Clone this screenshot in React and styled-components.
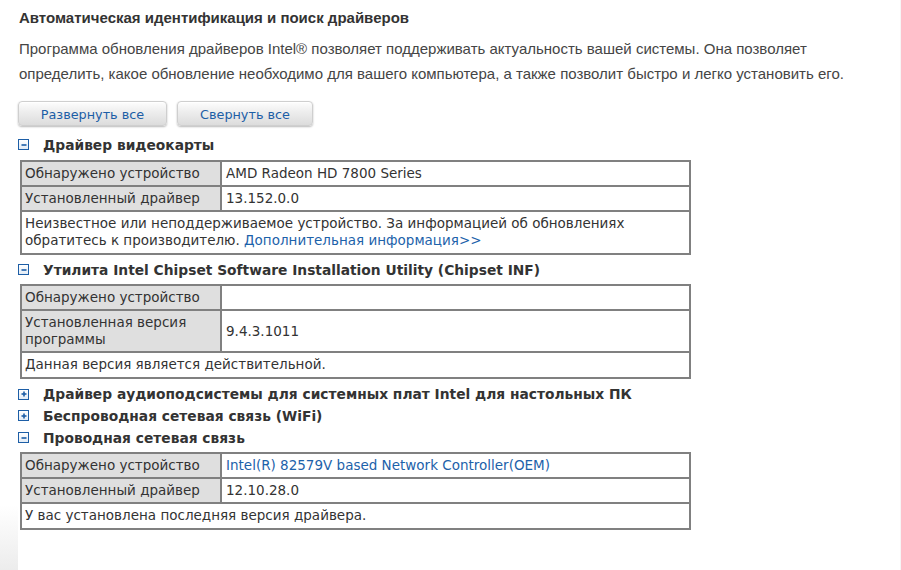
import React from "react";
import styled, { createGlobalStyle } from "styled-components";

const Global = createGlobalStyle`
  html, body { margin: 0; padding: 0; background: #fff; }
  body { font-family: "DejaVu Sans", Verdana, sans-serif; color: #333; }
`;

const Page = styled.div`
  display: flex;
  width: 901px;
  min-height: 570px;
`;

const Gutter = styled.div`
  flex: 0 0 18px;
  background: linear-gradient(to bottom, #fff 0, #fff 505px, #ececec 570px);
`;

const Main = styled.div`
  flex: 1;
  display: flex;
  flex-direction: column;
  border-right: 1px solid #f6f6f6;
`;

const Title = styled.h1`
  margin: 8px 0 0 1px;
  font-family: "Liberation Sans", Arial, sans-serif;
  font-size: 15px;
  font-weight: bold;
  line-height: 20px;
  color: #333;
`;

const Intro = styled.p`
  margin: 8px 0 0 1px;
  width: 850px;
  font-family: "Liberation Sans", Arial, sans-serif;
  font-size: 15px;
  line-height: 25px;
  color: #454545;
`;

const ButtonRow = styled.div`
  display: flex;
  gap: 10px;
  margin-top: 15px;
`;

const Button = styled.button`
  width: ${(p) => p.$w}px;
  height: 25px;
  padding: 1px 0 0;
  border: 1px solid #cfcfcf;
  border-radius: 4px;
  background: linear-gradient(to bottom, #fdfdfd 0%, #ededed 45%, #dcdcdc 100%);
  box-shadow: 0 1px 2px rgba(0, 0, 0, 0.28), inset 0 1px 0 #fff;
  font-family: "DejaVu Sans", Verdana, sans-serif;
  font-size: 12.8px;
  color: #1c5ea6;
  cursor: pointer;
`;

const Sections = styled.div`
  display: flex;
  flex-direction: column;
  margin-top: 8px;
`;

const Header = styled.div`
  display: flex;
  align-items: center;
  height: 21.7px;
  font-family: "DejaVu Sans", Verdana, sans-serif;
  font-size: 13.8px;
  font-weight: bold;
  color: #333;
`;

const Toggle = styled.span`
  flex: 0 0 auto;
  width: 11px;
  height: 11px;
  box-sizing: border-box;
  border: 1.5px solid #1d5ea6;
  background: linear-gradient(to bottom, #ffffff, #e3ecf6);
  margin-right: 14px;
  display: flex;
  align-items: center;
  justify-content: center;
`;

const HeaderText = styled.span`
  white-space: nowrap;
`;

const Table = styled.table`
  margin: 4px 0 4px 2px;
  width: 671px;
  border-collapse: collapse;
  border: 2px solid #808080;
  font-family: "DejaVu Sans", Verdana, sans-serif;
  font-size: 13.5px;
  line-height: 17px;
  color: #333;
`;

const Label = styled.td`
  width: 192px;
  border: 2px solid #808080;
  background: #dfdfdf;
  padding: 3px 3px;
  vertical-align: middle;
`;

const Value = styled.td`
  border: 2px solid #808080;
  padding: 3px 4px;
  vertical-align: middle;
  height: 17px;
`;

const Note = styled.td`
  border: 2px solid #808080;
  padding: 3px 3px 4px;
`;

const Link = styled.a`
  color: #1d62aa;
  text-decoration: none;
`;

function ToggleIcon({ open }) {
  return (
    <Toggle>
      <svg width="8" height="8" viewBox="0 0 8 8">
        <rect x="1.5" y="3.2" width="5" height="1.6" fill="#1d5ea6" />
        {!open && <rect x="3.2" y="1.5" width="1.6" height="5" fill="#1d5ea6" />}
      </svg>
    </Toggle>
  );
}

function SectionHeader({ open, children }) {
  return (
    <Header>
      <ToggleIcon open={open} />
      <HeaderText>{children}</HeaderText>
    </Header>
  );
}

function InfoTable({ rows, note }) {
  return (
    <Table>
      <tbody>
        {rows.map((r, i) => (
          <tr key={i}>
            <Label>{r[0]}</Label>
            <Value>{r[1]}</Value>
          </tr>
        ))}
        <tr>
          <Note colSpan={2}>{note}</Note>
        </tr>
      </tbody>
    </Table>
  );
}

export default function App() {
  return (
    <>
      <Global />
      <Page>
        <Gutter />
        <Main>
          <Title>Автоматическая идентификация и поиск драйверов</Title>
          <Intro>
            Программа обновления драйверов Intel® позволяет поддерживать актуальность вашей системы. Она позволяет
            определить, какое обновление необходимо для вашего компьютера, а также позволит быстро и легко установить его.
          </Intro>
          <ButtonRow>
            <Button $w={149}>Развернуть все</Button>
            <Button $w={136}>Свернуть все</Button>
          </ButtonRow>
          <Sections>
            <SectionHeader open>Драйвер видеокарты</SectionHeader>
            <InfoTable
              rows={[
                ["Обнаружено устройство", "AMD Radeon HD 7800 Series"],
                ["Установленный драйвер", "13.152.0.0"],
              ]}
              note={
                <>
                  Неизвестное или неподдерживаемое устройство. За информацией об обновлениях
                  <br />
                  обратитесь к производителю. <Link href="#">Дополнительная информация&gt;&gt;</Link>
                </>
              }
            />
            <SectionHeader open>Утилита Intel Chipset Software Installation Utility (Chipset INF)</SectionHeader>
            <InfoTable
              rows={[
                ["Обнаружено устройство", ""],
                [
                  <>
                    Установленная версия
                    <br />
                    программы
                  </>,
                  "9.4.3.1011",
                ],
              ]}
              note="Данная версия является действительной."
            />
            <SectionHeader>Драйвер аудиоподсистемы для системных плат Intel для настольных ПК</SectionHeader>
            <SectionHeader>Беспроводная сетевая связь (WiFi)</SectionHeader>
            <SectionHeader open>Проводная сетевая связь</SectionHeader>
            <InfoTable
              rows={[
                [
                  "Обнаружено устройство",
                  <Link href="#">Intel(R) 82579V based Network Controller(OEM)</Link>,
                ],
                ["Установленный драйвер", "12.10.28.0"],
              ]}
              note="У вас установлена последняя версия драйвера."
            />
          </Sections>
        </Main>
      </Page>
    </>
  );
}
